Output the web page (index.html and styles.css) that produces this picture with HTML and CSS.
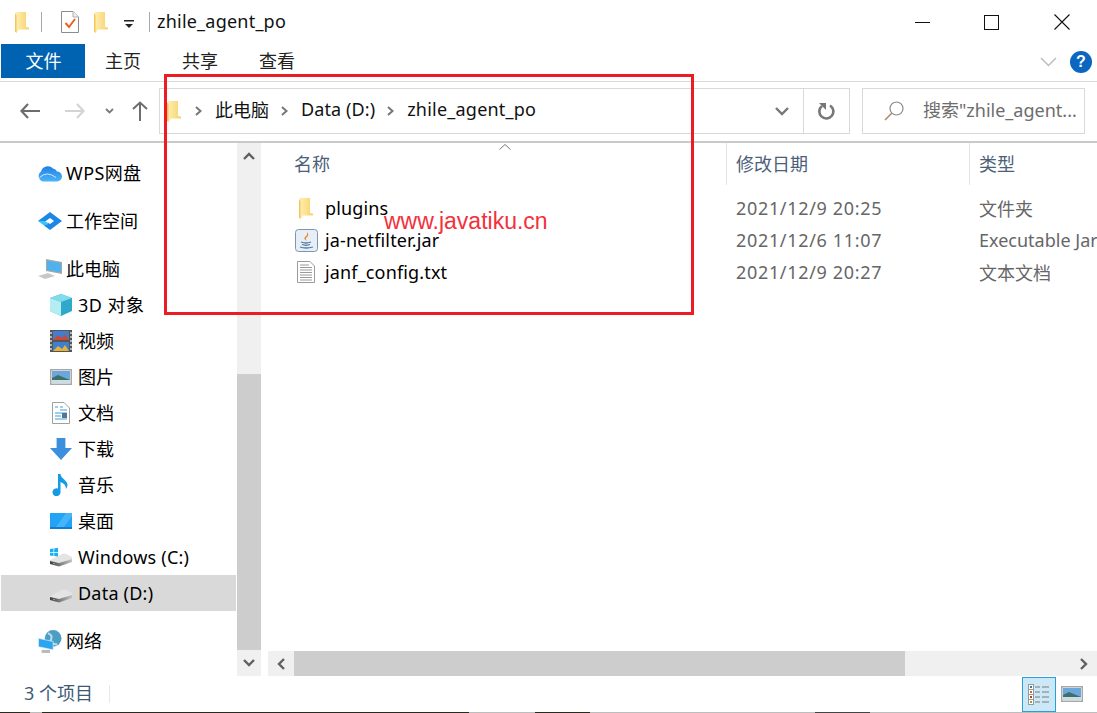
FILE: index.html
```html
<!DOCTYPE html>
<html lang="zh">
<head>
<meta charset="utf-8">
<title>zhile_agent_po</title>
<link rel="stylesheet" href="styles.css">
</head>
<body>
<svg class="defs" width="0" height="0">
  <defs>
    <linearGradient id="fg" x1="0" y1="0" x2="1" y2="0"><stop offset="0" stop-color="#fff0b8"/><stop offset="1" stop-color="#f8d268"/></linearGradient>
    <linearGradient id="df" x1="0" y1="0" x2="1" y2="0"><stop offset="0" stop-color="#3f3f3f"/><stop offset=".45" stop-color="#7d7d7d"/><stop offset="1" stop-color="#c4c4c4"/></linearGradient>
    <linearGradient id="cl" x1="0" y1="0" x2="0" y2="1"><stop offset="0" stop-color="#1f7fe8"/><stop offset="1" stop-color="#4cb4f6"/></linearGradient>
    <symbol id="folder" viewBox="0 0 14 21">
      <path d="M0 1.500 L1 0 H11 V15 L14 15.500 V17.500 H4 L1.500 21 L0 19.500Z" fill="url(#fg)"/>
      <path d="M0 1.500 V19.500 L1.500 21 V3Z" fill="#f2c65a"/>
    </symbol>
    <symbol id="drive" viewBox="0 0 22 14">
      <path d="M0 7 L12 1 Q14 0 16 1 L22 4 V6 L9 10 L0 8Z" fill="#e4e4e4"/>
      <path d="M0 8 L9 10 L22 6 V9 L9 13.500 L0 11Z" fill="url(#df)"/>
      <rect x="3" y="10" width="2" height="1" fill="#58c05a"/>
    </symbol>
    <symbol id="land" viewBox="0 0 22 16">
      <rect x="0.750" y="0.750" width="20.500" height="14.500" fill="#fff" stroke="#a8a8a8" stroke-width="1.500"/>
      <rect x="2" y="2" width="18" height="12" fill="#6aa8dc"/>
      <path d="M2 9 L8 6 L20 11 V14 H2Z" fill="#3f6f68"/>
      <rect x="2" y="11" width="18" height="3" fill="#c9dde6"/>
    </symbol>
  </defs>
</svg>
<div class="window">
  <header class="titlebar">
    <svg class="ic-folder qa1"><use href="#folder"/></svg>
    <span class="qsep sep-a"></span>
    <svg class="qa-doc" viewBox="0 0 18 22">
      <path d="M.5 .5H12L17.500 6V21.500H.5Z" fill="#fff" stroke="#8c8c8c"/>
      <path d="M12 .5V6H17.500" fill="#eee" stroke="#b0b0b0"/>
      <path d="M4.500 12 L8 16 L14 8" fill="none" stroke="#ec5f1f" stroke-width="2"/>
    </svg>
    <svg class="ic-folder qa2"><use href="#folder"/></svg>
    <svg class="qa-drop" viewBox="0 0 10 9"><rect x="0" y="0" width="10" height="1.500" fill="#222"/><path d="M1 4H9L5 8Z" fill="#222"/></svg>
    <span class="qsep sep-b"></span>
    <span class="title lat">zhile_agent_po</span>
    <div class="winctl">
      <svg class="w-min" viewBox="0 0 15 1"><rect width="15" height="1" fill="#111"/></svg>
      <svg class="w-max" viewBox="0 0 15 15"><rect x=".5" y=".5" width="14" height="14" fill="none" stroke="#111"/></svg>
      <svg class="w-close" viewBox="0 0 16 16"><path d="M.5 .5 15.500 15.500M15.500 .5 .5 15.500" stroke="#111" stroke-width="1.100"/></svg>
    </div>
  </header>

  <nav class="ribbon">
    <span class="tab tab-file">文件</span>
    <span class="tab">主页</span>
    <span class="tab">共享</span>
    <span class="tab">查看</span>
    <span class="ribbon-fill"></span>
    <svg class="rib-chev" viewBox="0 0 17 10"><path d="M1 1 8.500 8.500 16 1" fill="none" stroke="#bdbdbd" stroke-width="1.500"/></svg>
    <span class="help">?</span>
  </nav>

  <section class="addrbar">
    <svg class="nav-back" viewBox="0 0 20 16"><path d="M8 1 1.500 8 8 15M2 8H20" fill="none" stroke="#6d6d6d" stroke-width="2.200"/></svg>
    <svg class="nav-fwd" viewBox="0 0 20 16"><path d="M12 1 18.500 8 12 15M18 8H0" fill="none" stroke="#d4d4d4" stroke-width="2.200"/></svg>
    <svg class="nav-down" viewBox="0 0 9 6"><path d="M1 1 4.500 4.500 8 1" fill="none" stroke="#7a7a7a" stroke-width="1.800"/></svg>
    <svg class="nav-up" viewBox="0 0 16 20"><path d="M1 8 8 1.500 15 8M8 2V20" fill="none" stroke="#6d6d6d" stroke-width="2"/></svg>
    <div class="addr">
      <svg class="ic-folder addr-folder"><use href="#folder"/></svg>
      <svg class="crumb-chev" viewBox="0 0 7 10"><path d="M1 1 5.500 5 1 9" fill="none" stroke="#777" stroke-width="2"/></svg>
      <span class="crumb">此电脑</span>
      <svg class="crumb-chev" viewBox="0 0 7 10"><path d="M1 1 5.500 5 1 9" fill="none" stroke="#777" stroke-width="2"/></svg>
      <span class="crumb crumb-drive">Data (D:)</span>
      <svg class="crumb-chev" viewBox="0 0 7 10"><path d="M1 1 5.500 5 1 9" fill="none" stroke="#777" stroke-width="2"/></svg>
      <span class="crumb lat">zhile_agent_po</span>
      <span class="addr-fill"></span>
      <svg class="addr-drop" viewBox="0 0 14 9"><path d="M1 1 7 7 13 1" fill="none" stroke="#777" stroke-width="2.400"/></svg>
      <span class="addr-refresh">
        <svg viewBox="0 0 18 18" width="18" height="18"><path d="M12 3.500A7 7 0 1 1 4 4" fill="none" stroke="#777" stroke-width="2.600"/><path d="M1 1H8V8Z" fill="#777"/></svg>
      </span>
    </div>
    <div class="search">
      <svg class="search-ic" viewBox="0 0 20 20"><circle cx="12.500" cy="7.500" r="6.500" fill="none" stroke="#8a8a8a" stroke-width="1.200"/><path d="M8 12 1 19" stroke="#b08a6a" stroke-width="1.600"/></svg>
      <span class="search-text">搜索"zhile_agent...</span>
    </div>
  </section>

  <main class="body">
    <aside class="tree">
      <div class="node lvl0 first">
        <svg class="tree-ic" viewBox="0 0 24 17"><path d="M6 17A5.500 5.500 0 0 1 3 7 A7 7 0 0 1 15 4A5 5 0 0 1 19 7 A5 5 0 0 1 19 17Z" fill="url(#cl)"/><path d="M1.500 13Q9 6 18 13" fill="none" stroke="#cfeaff" stroke-width="1"/></svg>
        <span class="cjk lat-s">WPS网盘</span>
      </div>
      <div class="node lvl0 gap">
        <svg class="tree-ic" viewBox="0 0 24 18"><path fill-rule="evenodd" d="M12 0 24 9 12 18 6 13.500 10 10.500 12 12 16 9 12 6 5 11 0 9Z" fill="#1d86e6"/><path d="M0 9 7 9 11 12 6 13.500Z" fill="#35c8f5"/></svg>
        <span class="cjk">工作空间</span>
      </div>
      <div class="node lvl0 gap">
        <svg class="tree-ic" viewBox="0 0 24 20"><path d="M8 0 24 3V15L8 12Z" fill="#a8a8a8"/><path d="M9 1.500 23 4V13.500L9 11Z" fill="#4fb2ee"/><path d="M0 17 10 14 17 17 7 20Z" fill="#c8c8c8"/></svg>
        <span class="cjk">此电脑</span>
      </div>
      <div class="node lvl1">
        <svg class="tree-ic" viewBox="0 0 22 22"><path d="M11 0 22 4V17L11 22 0 17V4Z" fill="#2fa9c9"/><path d="M0 4 11 8 22 4 11 0Z" fill="#7fdcea"/><path d="M0 4 11 8V22L0 17Z" fill="#b5eef2"/></svg>
        <span class="cjk lat-w">3D 对象</span>
      </div>
      <div class="node lvl1">
        <svg class="tree-ic" viewBox="0 0 22 22"><rect width="22" height="22" fill="#555"/><rect x="3" y="1" width="16" height="9" fill="#3f7fcf"/><rect x="3" y="12" width="16" height="9" fill="#3f7fcf"/><path d="M3 10 8 5 12 8 15 4 19 10Z" fill="#c94a3a"/><path d="M3 21 8 16 12 19 15 15 19 21Z" fill="#e8b23a"/><path d="M1 2V4M1 6V8M1 10V12M1 14V16M1 18V20M21 2V4M21 6V8M21 10V12M21 14V16M21 18V20" stroke="#ddd" stroke-width="1.400"/></svg>
        <span class="cjk">视频</span>
      </div>
      <div class="node lvl1">
        <svg class="tree-ic"><use href="#land"/></svg>
        <span class="cjk">图片</span>
      </div>
      <div class="node lvl1">
        <svg class="tree-ic" viewBox="0 0 18 22"><path d="M.5 .5H12L17.500 6V21.500H.5Z" fill="#fff" stroke="#a0a0a0"/><path d="M3 5H6M8 5H11M8 8H15M3 11H15M3 14H9M3 17H15" stroke="#3aa0e0" stroke-width="1.200"/><rect x="10" y="11" width="5" height="5" fill="#56748c"/></svg>
        <span class="cjk">文档</span>
      </div>
      <div class="node lvl1">
        <svg class="tree-ic" viewBox="0 0 20 20"><path d="M6 0H14V9H20L10 20 0 9H6Z" fill="#3c8fdc"/></svg>
        <span class="cjk">下载</span>
      </div>
      <div class="node lvl1">
        <svg class="tree-ic" viewBox="0 0 18 22"><path d="M6 0H8.500C9 5 15.500 6 15.500 11Q15.500 13 14 15Q14 10 8.500 8V18A4 4 0 1 1 6 14.500Z" fill="#139be8"/></svg>
        <span class="cjk">音乐</span>
      </div>
      <div class="node lvl1">
        <svg class="tree-ic" viewBox="0 0 22 16"><rect width="22" height="16" fill="#0f7ccf"/><rect y="0" width="22" height="14" fill="#22a3f5"/><path d="M6 14 16 0H22V3L14 14Z" fill="#45b4f8"/></svg>
        <span class="cjk">桌面</span>
      </div>
      <div class="node lvl1">
        <svg class="tree-ic" viewBox="0 0 22 22">
          <use href="#drive" x="0" y="7" width="22" height="14"/>
          <path d="M0 3 3.500 2.500V6H0ZM4.200 2.400 8 1.800V6H4.200ZM0 6.800H3.500V10L0 9.500ZM4.200 6.800H8V10.500L4.200 10Z" fill="#17b0f0"/>
        </svg>
        <span class="lat">Windows (C:)</span>
      </div>
      <div class="node lvl1 selected">
        <svg class="tree-ic" viewBox="0 0 22 22"><use href="#drive" x="0" y="7" width="22" height="14"/></svg>
        <span class="lat">Data (D:)</span>
      </div>
      <div class="node lvl0 gap net">
        <svg class="tree-ic" viewBox="0 0 22 22"><circle cx="14" cy="8" r="8" fill="#4c9ec4"/><path d="M9 3Q14 5 12 9T18 14" fill="none" stroke="#b9dcec" stroke-width="2"/><path d="M0 8 14 11V19L0 16Z" fill="#2ba5f0" stroke="#e8f4fb" stroke-width=".6"/><path d="M3 19H11V22H3Z" fill="#bbb"/></svg>
        <span class="cjk">网络</span>
      </div>
    </aside>

    <div class="vscroll">
      <span class="sb-btn"><svg viewBox="0 0 12 8" width="12" height="8"><path d="M1 7 6 2 11 7" fill="none" stroke="#606060" stroke-width="2.400"/></svg></span>
      <span class="sb-track"></span>
      <span class="sb-thumb"></span>
      <span class="sb-btn"><svg viewBox="0 0 12 8" width="12" height="8"><path d="M1 1 6 6 11 1" fill="none" stroke="#606060" stroke-width="2.400"/></svg></span>
    </div>

    <div class="files">
      <div class="colhead">
        <span class="col c-name">名称</span>
        <span class="col c-date">修改日期</span>
        <span class="col c-type">类型</span>
        <svg class="sort" viewBox="0 0 12 6"><path d="M.5 5.500 6 .5 11.500 5.500" fill="none" stroke="#7a7a7a"/></svg>
      </div>
      <div class="rows">
        <div class="row">
          <span class="f-ic"><svg class="ic-folder"><use href="#folder"/></svg></span>
          <span class="f-name">plugins</span>
          <span class="f-date">2021/12/9 20:25</span>
          <span class="f-type">文件夹</span>
        </div>
        <div class="row">
          <span class="f-ic">
            <svg class="jar" viewBox="0 0 23 23"><rect x=".5" y=".5" width="22" height="22" rx="3" fill="#e8eef5" stroke="#7c97ad"/><path d="M12 3Q15 6 11 9Q10 10 12 12Q8 10 10 8Q13 6 12 3Z" fill="#e8842a"/><path d="M6 13Q11 15 16 13M7 15.500Q11 17 15 15.500M5 18Q11 20 18 18" fill="none" stroke="#4a7ea8" stroke-width="1.300"/></svg>
          </span>
          <span class="f-name">ja-netfilter.jar</span>
          <span class="f-date">2021/12/6 11:07</span>
          <span class="f-type">Executable Jar File</span>
        </div>
        <div class="row">
          <span class="f-ic">
            <svg class="txt" viewBox="0 0 18 22"><path d="M.5 .5H13L17.500 5V21.500H.5Z" fill="#fff" stroke="#9a9a9a"/><path d="M3 4H12M3 6.500H15M3 9H15M3 11.500H15M3 14H15M3 16.500H15M3 19H15" stroke="#9a9a9a"/></svg>
          </span>
          <span class="f-name">janf_config.txt</span>
          <span class="f-date">2021/12/9 20:27</span>
          <span class="f-type">文本文档</span>
        </div>
      </div>
      <div class="hscroll">
        <span class="hs-btn"><svg viewBox="0 0 8 12" width="8" height="12"><path d="M7 1 2 6 7 11" fill="none" stroke="#606060" stroke-width="2.400"/></svg></span>
        <span class="hs-thumb"></span>
        <span class="hs-track"></span>
        <span class="hs-btn"><svg viewBox="0 0 8 12" width="8" height="12"><path d="M1 1 6 6 1 11" fill="none" stroke="#606060" stroke-width="2.400"/></svg></span>
      </div>
    </div>
  </main>

  <footer class="status">
    <span class="count">3 个项目</span>
    <span class="st-sep"></span>
    <span class="st-fill"></span>
    <span class="view view-on">
      <svg viewBox="0 0 22 21" width="22" height="21">
        <g fill="#fff" stroke="#999"><rect x=".5" y=".5" width="5" height="5"/><rect x=".5" y="5.500" width="5" height="5"/><rect x=".5" y="10.500" width="5" height="5"/><rect x=".5" y="15.500" width="5" height="5"/></g>
        <rect x="2" y="2" width="2" height="2" fill="#2f7f9f"/><rect x="2" y="7" width="2" height="2" fill="#b8782a"/><rect x="2" y="12" width="2" height="2" fill="#c0392b"/><rect x="2" y="17" width="2" height="2" fill="#8aa83a"/>
        <path d="M7 3H12M14 3H21M7 8H12M14 8H21M7 13H12M14 13H21M7 18H12M14 18H21" stroke="#7a7a7a" stroke-width="1.200"/>
      </svg>
    </span>
    <svg class="view-thumb"><use href="#land"/></svg>
  </footer>
  <div class="edge"></div>
</div>

<div class="redbox"></div>
<div class="watermark">www.javatiku.cn</div>
</body>
</html>
```

FILE: styles.css
```css
* { box-sizing: border-box; }
html, body { margin: 0; padding: 0; background: #fff; }
body { width: 1097px; height: 713px; overflow: hidden; position: relative; }
.defs { position: absolute; }
svg { display: block; flex: none; }

.window {
  height: 713px;
  display: flex;
  flex-direction: column;
  font-family: "Noto Sans", "Noto Sans CJK SC", sans-serif;
  font-size: 18px;
  color: #000;
}
.lat { letter-spacing: .22px; }
.lat-s { letter-spacing: .4px; }
.lat-w { letter-spacing: .5px; }

/* title bar */
.titlebar { height: 44px; display: flex; align-items: center; flex: none; }
.ic-folder { width: 14px; height: 21px; }
.qa1 { margin-left: 15px; }
.qsep { width: 1px; height: 20px; background: #a9a9a9; }
.sep-a { margin-left: 12px; }
.qa-doc { width: 18px; height: 22px; margin-left: 19px; }
.qa2 { margin-left: 15px; }
.qa-drop { width: 10px; height: 9px; margin-left: 16px; margin-top: 4px; }
.sep-b { margin-left: 15px; }
.title { margin-left: 7px; color: #111; padding-bottom: 2px; }
.winctl { margin-left: auto; display: flex; align-items: center; margin-right: 27px; }
.w-min { width: 15px; height: 1px; margin-right: 54px; }
.w-max { width: 15px; height: 15px; margin-right: 55px; }
.w-close { width: 16px; height: 16px; }

/* ribbon */
.ribbon {
  height: 38px;
  flex: none;
  display: flex;
  align-items: flex-start;
  padding-left: 1px;
  border-bottom: 1px solid #dadada;
}
.tab { height: 34px; line-height: 34px; padding: 0 20px; margin-right: 1px; color: #222; }
.tab-file { width: 84px; padding: 0 0 0 1px; margin: 0; display: flex; align-items: center; justify-content: center; background: #0063b1; color: #fff; }
.ribbon-fill { flex: 1; }
.rib-chev { width: 17px; height: 10px; margin: 13px 13px 0 0; }
.help {
  width: 22px; height: 22px; margin: 7px 5px 0 0;
  border-radius: 50%;
  background: #0a66c0;
  color: #fff;
  font: bold 16px/22px "Liberation Sans", sans-serif;
  text-align: center;
}

/* address row */
.addrbar {
  height: 61px;
  flex: none;
  display: flex;
  align-items: center;
  padding-bottom: 1px;
  border-bottom: 2px solid #c9c9c9;
}
.nav-back { width: 20px; height: 16px; margin-left: 20px; }
.nav-fwd { width: 20px; height: 16px; margin-left: 25px; }
.nav-down { width: 9px; height: 6px; margin-left: 20px; }
.nav-up { width: 16px; height: 20px; margin-left: 18px; }
.addr {
  width: 691px;
  height: 46px;
  margin-left: 11px;
  border: 1px solid #d9d9d9;
  display: flex;
  align-items: center;
}
.addr-folder { margin-left: 7px; }
.crumb-chev { width: 7px; height: 10px; margin: 0 13px 0 12px; }
.addr-folder + .crumb-chev { margin-left: 14px; }
.crumb { color: #111; padding-bottom: 4px; }
.crumb-drive { letter-spacing: .1px; }
.addr-fill { flex: 1; }
.addr-drop { width: 14px; height: 9px; margin-right: 14px; }
.addr-refresh {
  width: 46px;
  height: 100%;
  border-left: 1px solid #d9d9d9;
  display: flex;
  align-items: center;
  justify-content: center;
}
.search {
  width: 223px;
  height: 46px;
  margin-left: 12px;
  border: 1px solid #d9d9d9;
  display: flex;
  align-items: center;
  padding-left: 21px;
  color: #6d6d6d;
  white-space: nowrap;
  overflow: hidden;
}
.search-ic { width: 20px; height: 20px; }
.search-text { margin-left: 19px; padding-bottom: 4px; }

/* main */
.body { flex: 1; display: flex; min-height: 0; }
.tree { width: 237px; flex: none; padding: 0 1px; }
.node { height: 36px; display: flex; align-items: center; white-space: nowrap; color: #000; }
.cjk { padding-bottom: 2px; }
.lvl0 { padding-left: 37px; }
.lvl0 .tree-ic { width: 24px; height: 20px; }
.lvl0 span { margin-left: 4px; }
.lvl1 { padding-left: 49px; }
.lvl1 .tree-ic { width: 22px; height: 22px; }
.lvl1 span { margin-left: 6px; }
.net .tree-ic { height: 23px; }
.first { margin-top: 12px; }
.gap { margin-top: 12px; }
.selected { background: #d9d9d9; width: 235px; }

.vscroll { width: 24px; flex: none; display: flex; flex-direction: column; background: #f0f0f0; }
.sb-btn { height: 26px; flex: none; display: flex; align-items: center; justify-content: center; }
.sb-track { height: 205px; flex: none; }
.sb-thumb { flex: 1; background: #cdcdcd; }

.files { flex: 1; min-width: 0; display: flex; flex-direction: column; padding-left: 7px; overflow: hidden; }
.colhead { height: 42px; flex: none; position: relative; display: flex; align-items: center; color: #4c607a; }
.col { flex: none; height: 100%; display: flex; align-items: center; padding-bottom: 3px; }
.c-name { width: 459px; padding-left: 26px; border-right: 1px solid #e5e5e5; }
.c-date { width: 243px; padding-left: 9px; border-right: 1px solid #e5e5e5; }
.c-type { padding-left: 9px; }
.sort { position: absolute; left: 231px; top: 1px; width: 12px; height: 6px; }
.rows { flex: 1; padding-top: 7px; }
.row { height: 32px; display: flex; align-items: center; white-space: nowrap; }
.f-ic { width: 26px; margin-left: 25px; flex: none; display: flex; justify-content: center; }
.f-name { width: 411px; flex: none; margin-left: 6px; color: #000; letter-spacing: .15px; }
.f-date { width: 243px; flex: none; color: #666; letter-spacing: .67px; }
.f-type { flex: none; color: #666; }
.jar { width: 23px; height: 23px; }
.txt { width: 18px; height: 22px; }

.hscroll { height: 25px; flex: none; display: flex; background: #f0f0f0; }
.hs-btn { width: 26px; flex: none; display: flex; align-items: center; justify-content: center; }
.hs-thumb { width: 611px; background: #cdcdcd; flex: none; }
.hs-track { flex: 1; }

/* status */
.status { height: 36px; flex: none; display: flex; align-items: center; color: #3c5a78; }
.count { margin-left: 24px; padding-bottom: 4px; }
.st-sep { width: 1px; height: 18px; background: #e8e8e8; margin-left: 16px; }
.st-fill { flex: 1; }
.view { width: 34px; height: 35px; display: flex; align-items: center; justify-content: center; }
.view-on { background: #cce8f7; border: 1px solid #26a0da; }
.view-thumb { width: 22px; height: 16px; margin: 0 14px 0 5px; }
.edge {
  height: 1px;
  flex: none;
  background: linear-gradient(90deg,
    #2a2a1e 0, #2a2a1e 30px, #bdbdbd 30px, #bdbdbd 42px, #2a2a1e 42px,
    #2a2a1e 469px, #bdbdbd 469px, #bdbdbd 535px, #2a2a1e 535px, #2a2a1e 590px,
    #bdbdbd 590px, #bdbdbd 815px, #444 815px, #444 870px, #bdbdbd 870px);
}

/* overlays */
.redbox {
  position: absolute;
  left: 164px;
  top: 74px;
  width: 530px;
  height: 241px;
  border: 3px solid #ed1c24;
  pointer-events: none;
}
.watermark {
  position: absolute;
  left: 384px;
  top: 207px;
  font: 23px/28px "Liberation Sans", sans-serif;
  color: #f4303a;
}
```
